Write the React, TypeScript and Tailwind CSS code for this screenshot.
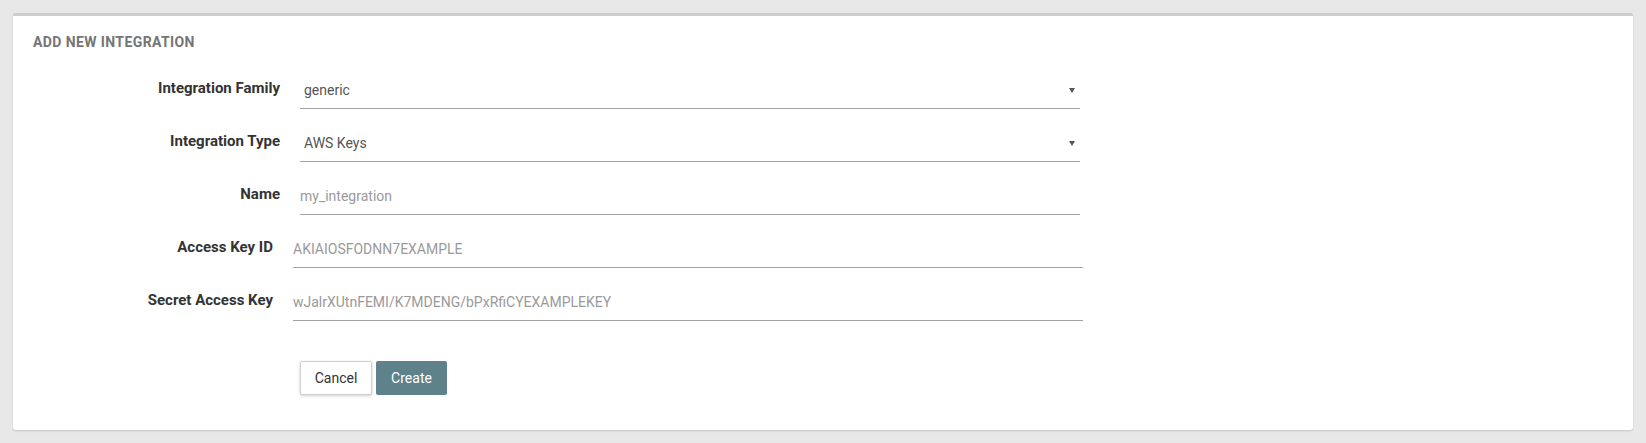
import React from 'react';

type Field = {
  label: string;
  value: string;
  placeholder?: boolean;
  select?: boolean;
  wide?: boolean;
};

const fields: Field[] = [
  { label: 'Integration Family', value: 'generic', select: true },
  { label: 'Integration Type', value: 'AWS Keys', select: true },
  { label: 'Name', value: 'my_integration', placeholder: true },
  { label: 'Access Key ID', value: 'AKIAIOSFODNN7EXAMPLE', placeholder: true, wide: true },
  { label: 'Secret Access Key', value: 'wJalrXUtnFEMI/K7MDENG/bPxRfiCYEXAMPLEKEY', placeholder: true, wide: true },
];

function FormRow({ field }: { field: Field }) {
  return (
    <div className="flex items-start gap-5">
      <div
        className={
          'pt-[6px] text-right text-[15px] leading-5 font-bold text-[#333] ' +
          (field.wide ? 'w-[260px]' : 'w-[267px]')
        }
      >
        {field.label}
      </div>
      <div
        className={
          'relative h-[37px] border-b border-[#9fa3a5] pt-2 text-[14px] leading-5 ' +
          (field.wide ? 'w-[790px] ' : 'w-[780px] ') +
          (field.select ? 'pl-1 ' : 'pl-0 ') +
          (field.placeholder ? 'text-[#9a9a9a]' : 'text-[#555]')
        }
      >
        {field.value}
        {field.select && (
          <svg
            className="absolute right-[5px] top-[16px]"
            width="6"
            height="5"
            viewBox="0 0 6 5"
          >
            <polygon points="0,0 6,0 3,5" fill="#555" />
          </svg>
        )}
      </div>
    </div>
  );
}

export default function App() {
  return (
    <div className="h-[443px] bg-[#e8e8e8] px-[13px] pt-[13px] font-['Roboto',sans-serif]">
      <div className="h-[417px] rounded-[3px] border-t-[3px] border-[#cdcdcd] bg-white shadow-[0_1px_2px_rgba(0,0,0,0.15)]">
        <h2 className="pl-5 pt-4 text-[14px] leading-5 font-bold uppercase tracking-[0.4px] text-[#757575]">
          Add New Integration
        </h2>
        <div className="mt-5 flex flex-col gap-4">
          {fields.map((f) => (
            <FormRow key={f.label} field={f} />
          ))}
        </div>
        <div className="mt-10 flex gap-1 pl-[287px]">
          <button className="h-[34px] w-[72px] rounded-[2px] border border-[#d0d0d0] bg-white text-[14px] text-[#333] shadow-[0_1px_3px_rgba(0,0,0,0.2)]">
            Cancel
          </button>
          <button className="h-[34px] w-[71px] rounded-[2px] bg-[#5e818a] text-[14px] text-white">
            Create
          </button>
        </div>
      </div>
    </div>
  );
}
